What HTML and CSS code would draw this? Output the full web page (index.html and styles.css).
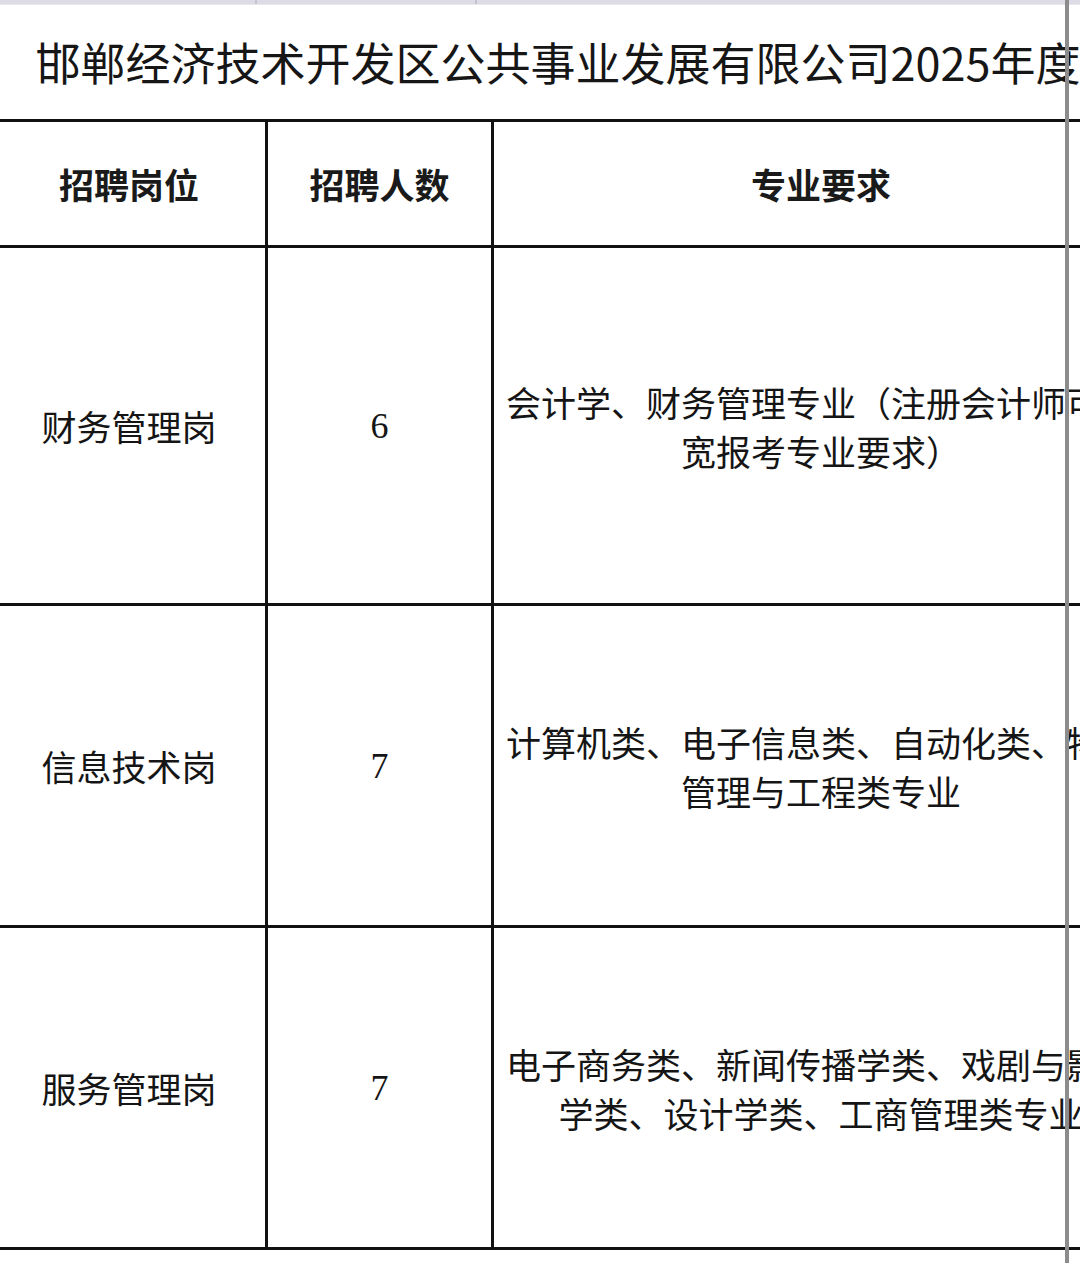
FILE: index.html
```html
<!DOCTYPE html>
<html lang="zh-CN">
<head>
<meta charset="utf-8">
<title>招聘岗位</title>
<link rel="stylesheet" href="styles.css">
</head>
<body>
<div class="viewport">
  <div class="prev-row">
    <span class="prev-cell c1"></span>
    <span class="prev-cell c2"></span>
    <span class="prev-cell c3"></span>
  </div>
  <table class="sheet">
    <colgroup>
      <col class="col-post">
      <col class="col-num">
      <col class="col-major">
    </colgroup>
    <tr class="title-row">
      <td colspan="3" class="title">邯郸经济技术开发区公共事业发展有限公司2025年度公开招聘工作人员岗位信息表</td>
    </tr>
    <tr class="head-row">
      <th>招聘岗位</th>
      <th>招聘人数</th>
      <th>专业要求</th>
    </tr>
    <tr class="row-a">
      <td class="post">财务管理岗</td>
      <td class="num">6</td>
      <td class="major">会计学、财务管理专业（注册会计师可放宽报考专业要求）</td>
    </tr>
    <tr class="row-b">
      <td class="post">信息技术岗</td>
      <td class="num">7</td>
      <td class="major">计算机类、电子信息类、自动化类、物流管理与工程类专业</td>
    </tr>
    <tr class="row-b">
      <td class="post">服务管理岗</td>
      <td class="num">7</td>
      <td class="major">电子商务类、新闻传播学类、戏剧与影视学类、设计学类、工商管理类专业</td>
    </tr>
  </table>
  <div class="scrollbar"></div>
</div>
</body>
</html>
```

FILE: styles.css
```css
html, body {
  margin: 0;
  padding: 0;
  background: #ffffff;
}

.viewport {
  position: relative;
  width: 1080px;
  height: 1263px;
  overflow: hidden;
  font-family: "Noto Sans CJK SC", "Noto Sans", sans-serif;
  color: #151515;
}

.prev-row {
  display: flex;
  height: 4px;
  background: #dddbe6;
  border-bottom: 1px solid #e8e7ee;
}

.prev-cell {
  display: block;
}

.prev-cell.c1 { width: 255px; border-right: 2px solid #c4c2cf; }
.prev-cell.c2 { width: 218px; border-right: 2px solid #c4c2cf; }
.prev-cell.c3 { flex: 1; }

.sheet {
  margin-left: -10px;
  width: 1158px;
  border-collapse: collapse;
  table-layout: fixed;
}

.col-post { width: 275px; }
.col-num { width: 226px; }
.col-major { width: 657px; }

.sheet td,
.sheet th {
  border: 3px solid #111111;
  padding: 0 12px;
  text-align: center;
  vertical-align: middle;
}

.title-row .title {
  height: 112px;
  border-top: none;
  border-left: none;
  border-right: none;
  text-align: left;
  padding-left: 44px;
  padding-bottom: 2px;
  font-size: 45px;
  font-weight: 400;
  white-space: nowrap;
  color: #161616;
}

.head-row th {
  height: 123px;
  font-size: 35px;
  font-weight: 700;
  color: #1a1a1a;
}

.row-a td { height: 355px; }
.row-b td { height: 319px; }

.post {
  font-size: 35px;
  line-height: 49px;
}

.num {
  font-family: "Liberation Serif", "Times New Roman", serif;
  font-size: 36px;
}

.major {
  font-size: 35px;
  line-height: 49px;
}

.scrollbar {
  position: absolute;
  top: 0;
  left: 1065px;
  width: 4px;
  height: 1263px;
  background: #8c8c8c;
}
```
